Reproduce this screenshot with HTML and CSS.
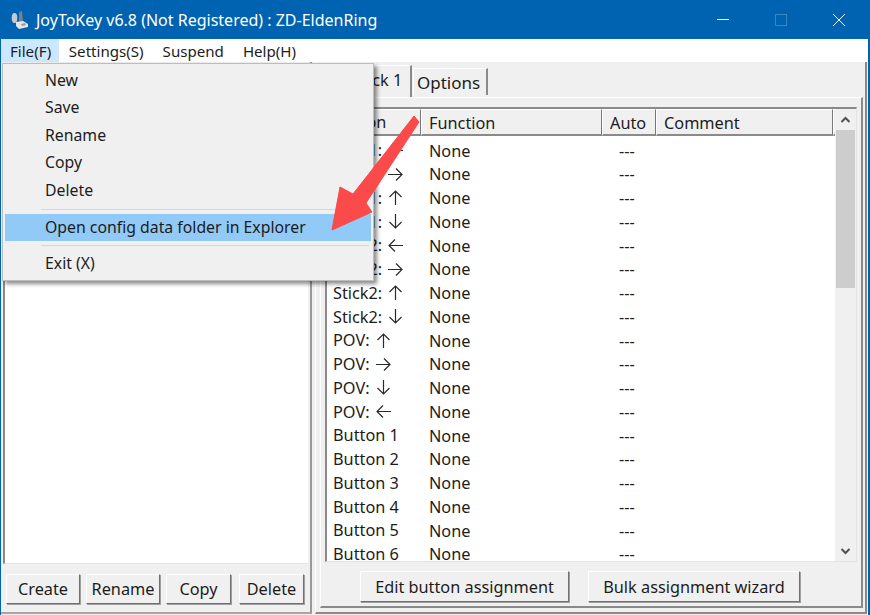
FILE: index.html
```html
<!DOCTYPE html>
<html lang="en">
<head>
    <meta charset="UTF-8">
    <title>JoyToKey</title>
    <link rel="stylesheet" href="styles.css">
</head>
<body>
    <div class="window">
        <div class="titlebar">
            <svg class="app-icon" width="18" height="18" viewBox="0 0 18 18">
                <ellipse cx="3.5" cy="7" rx="2.8" ry="5" fill="#c4cad0"/>
                <path d="M8 1 L11 0 L12 11 L8 12 Z" fill="#76818d"/>
                <path d="M5 11 L12 10 L17 13 L17 16 L8 18 L5 15 Z" fill="#e4e7ea"/>
                <path d="M10 13 L14 12 L15 14 L11 15 Z" fill="#b98c92"/>
            </svg>
            <span class="title-text">JoyToKey v6.8 (Not Registered) : ZD-EldenRing</span>
            <div class="win-controls">
                <svg width="12" height="12" viewBox="0 0 12 12"><path d="M0 5.5 H12" stroke="#fff" fill="none"/></svg>
                <svg width="12" height="12" viewBox="0 0 12 12"><rect x="0.5" y="0.5" width="11" height="11" stroke="#3a86c4" fill="none"/></svg>
                <svg width="12" height="12" viewBox="0 0 12 12"><path d="M0 0 L12 12 M12 0 L0 12" stroke="#fff" fill="none"/></svg>
            </div>
        </div>
        <div class="menubar">
            <span class="menu-item active">File(F)</span>
            <span class="menu-item">Settings(S)</span>
            <span class="menu-item">Suspend</span>
            <span class="menu-item">Help(H)</span>
        </div>
        <div class="content">
            <div class="left-pane">
                <div class="config-list"></div>
                <div class="left-buttons">
                    <button class="btn btn-create">Create</button>
                    <button class="btn btn-rename">Rename</button>
                    <button class="btn btn-copy">Copy</button>
                    <button class="btn btn-delete">Delete</button>
                </div>
            </div>
            <div class="right-pane">
                <div class="tabs">
                    <div class="tab tab-stick">Joystick 1</div>
                    <div class="tab tab-options">Options</div>
                </div>
                <div class="page">
                    <div class="grid">
                        <div class="grid-main">
                            <div class="grid-head">
                                <div class="col-button head-cell">Button</div>
                                <div class="col-function head-cell">Function</div>
                                <div class="col-auto head-cell">Auto</div>
                                <div class="col-comment head-cell">Comment</div>
                                <div class="head-cell head-rest"></div>
                            </div>
                            <div class="rows" id="rows"></div>
                        </div>
                        <div class="scrollbar">
                            <svg class="scroll-arrow" width="21" height="21" viewBox="0 0 21 21"><path d="M6.5 13 L10.5 9 L14.5 13" stroke="#505050" stroke-width="2" fill="none"/></svg>
                            <div class="scroll-thumb"></div>
                            <div class="scroll-track"></div>
                            <svg class="scroll-arrow" width="21" height="21" viewBox="0 0 21 21"><path d="M6.5 9 L10.5 13 L14.5 9" stroke="#505050" stroke-width="2" fill="none"/></svg>
                        </div>
                    </div>
                    <div class="page-buttons">
                        <button class="btn btn-edit">Edit button assignment</button>
                        <button class="btn btn-bulk">Bulk assignment wizard</button>
                    </div>
                </div>
            </div>
        </div>

        <div class="dropdown">
            <div class="drop-item">New</div>
            <div class="drop-item">Save</div>
            <div class="drop-item">Rename</div>
            <div class="drop-item">Copy</div>
            <div class="drop-item">Delete</div>
            <div class="drop-sep"></div>
            <div class="drop-item selected">Open config data folder in Explorer</div>
            <div class="drop-sep"></div>
            <div class="drop-item">Exit (X)</div>
        </div>

        <svg class="red-arrow" width="100" height="125" viewBox="0 0 100 125">
            <path d="M83 2 L88 8 L35 89 L41 98 L1 116 L9 73 L22 80 Z" fill="#fa4a4a" stroke="#fa4a4a" stroke-linejoin="round"/>
        </svg>
    </div>

    <script>
        const arrowPaths = {
            up: 'M7.5 15 V1 M1.5 7 L7.5 1 L13.5 7',
            down: 'M7.5 0 V14 M1.5 8 L7.5 14 L13.5 8',
            left: 'M15 7.5 H1 M7 1.5 L1 7.5 L7 13.5',
            right: 'M0 7.5 H14 M8 1.5 L14 7.5 L8 13.5'
        };
        const rowNames = [
            ['Stick1:', 'left'], ['Stick1:', 'right'], ['Stick1:', 'up'], ['Stick1:', 'down'],
            ['Stick2:', 'left'], ['Stick2:', 'right'], ['Stick2:', 'up'], ['Stick2:', 'down'],
            ['POV:', 'up'], ['POV:', 'right'], ['POV:', 'down'], ['POV:', 'left'],
            ['Button 1'], ['Button 2'], ['Button 3'], ['Button 4'], ['Button 5'], ['Button 6']
        ];
        let html = '';
        rowNames.forEach(([name, dir]) => {
            const arrow = dir
                ? `<svg class="dir-arrow" width="15" height="15" viewBox="0 0 15 15"><path d="${arrowPaths[dir]}" stroke="#2a2a2a" stroke-width="1.2" fill="none"/></svg>`
                : '';
            html += `<div class="row">
                <div class="col-button">${name}${arrow}</div>
                <div class="col-function">None</div>
                <div class="col-auto">---</div>
                <div class="col-comment"></div>
            </div>`;
        });
        document.getElementById('rows').innerHTML = html;
    </script>
</body>
</html>
```

FILE: styles.css
```css
* {
    box-sizing: border-box;
}
html, body {
    margin: 0;
    padding: 0;
}
body {
    width: 870px;
    height: 615px;
    overflow: hidden;
    font-family: "Noto Sans", "Noto Sans CJK SC", sans-serif;
    font-size: 16.3px;
    color: #1c1c1c;
}
.window {
    position: relative;
    width: 870px;
    height: 615px;
    display: flex;
    flex-direction: column;
    background-color: #f0f0f0;
    border-left: 1px solid #0063b1;
    border-right: 2px solid #0063b1;
    overflow: hidden;
}

/* title bar */
.titlebar {
    height: 39px;
    flex: none;
    display: flex;
    align-items: center;
    padding-left: 10px;
    background-color: #0063b1;
    color: #fff;
}
.app-icon {
    margin-right: 7px;
}
.title-text {
    font-size: 16px;
}
.win-controls {
    margin-left: auto;
    margin-right: 23px;
    display: flex;
    gap: 46px;
}

/* menu */
.menubar {
    height: 23px;
    flex: none;
    display: flex;
    background-color: #fff;
}
.menu-item {
    padding: 0 9.5px;
    line-height: 24px;
    font-size: 15.1px;
}
.menu-item.active {
    padding: 0 8px 0 9px;
    background-color: #cce8ff;
}
.dropdown {
    position: absolute;
    left: 1px;
    top: 63px;
    width: 372px;
    height: 218px;
    padding: 2.5px 2px;
    background-color: #f0f0f0;
    border: 1px solid #bdbdbd;
    box-shadow: 3px 3px 4px rgba(0,0,0,0.45);
}
.drop-item {
    height: 27.5px;
    line-height: 27px;
    padding-left: 40px;
    font-size: 15.8px;
}
.drop-item.selected {
    background-color: #91c9f7;
}
.drop-sep {
    height: 1px;
    margin: 4.5px 2px 4px 36px;
    background-color: #d7d7d7;
}
.drop-item.selected + .drop-sep {
    margin-top: 4px;
}

/* left side */
.content {
    flex: 1;
    display: flex;
    min-height: 0;
}
.left-pane {
    width: 311px;
    flex: none;
    display: flex;
    flex-direction: column;
    margin-bottom: 1px;
    padding: 2px 0 1px 2px;
    border-right: 2px solid #9a9a9a;
    border-bottom: 2px solid #a6a6a6;
}
.config-list {
    flex: 1;
    margin-right: 2px;
    background-color: #fff;
    border-left: 2px solid #8a8a8a;
    border-bottom: 1px solid #e3e3e3;
}
.left-buttons {
    height: 47px;
    flex: none;
    display: flex;
    padding: 10px 0 0 3px;
}
.left-buttons .btn {
    height: 30px;
}
.btn {
    height: 31px;
    padding: 0;
    font-family: inherit;
    font-size: 16.3px;
    color: #1c1c1c;
    background-color: #f0f0f0;
    border: 1px solid;
    border-color: #fff #6f6f6f #6f6f6f #fff;
    box-shadow: 1px 1px 0 #a0a0a0;
}
.btn-create { width: 74px; margin-right: 6px; }
.btn-rename { width: 74px; margin-right: 6px; }
.btn-copy { width: 65px; margin-right: 8px; }
.btn-delete { width: 65px; }

/* right side */
.right-pane {
    flex: 1;
    display: flex;
    flex-direction: column;
    min-width: 0;
    margin: 0 1px 1px 3px;
    padding: 0 2px 4px 4px;
    border-left: 1px solid #fff;
    border-right: 2px solid #8a8a8a;
    border-bottom: 2px solid #8a8a8a;
}
.tabs {
    height: 35px;
    flex: none;
    display: flex;
    align-items: flex-end;
    padding-left: 8px;
}
.tab {
    padding-left: 3px;
    border-top: 1px solid #fff;
    border-left: 1px solid #fff;
    border-right: 2px solid #8a8a8a;
    background-color: #f0f0f0;
}
.tab-stick {
    width: 84px;
    height: 32px;
    margin-right: 1px;
    padding-right: 9px;
    line-height: 29px;
    text-align: right;
    white-space: nowrap;
}
.tab-options {
    width: 75px;
    height: 27px;
    margin-bottom: 2px;
    line-height: 28px;
    font-size: 17px;
}
.page {
    flex: 1;
    display: flex;
    flex-direction: column;
    min-height: 0;
    padding: 9px 4px 0 4px;
    border-top: 1px solid #fff;
    border-left: 1px solid #fff;
    border-right: 2px solid #8a8a8a;
    border-bottom: 2px solid #8a8a8a;
}
.grid {
    height: 455px;
    flex: none;
    display: flex;
    background-color: #fff;
    border-top: 2px solid #8a8a8a;
    border-left: 2px solid #8a8a8a;
    border-right: 1px solid #e3e3e3;
    border-bottom: 1px solid #e3e3e3;
    overflow: hidden;
}
.grid-main {
    flex: 1;
    min-width: 0;
    display: flex;
    flex-direction: column;
}
.grid-head {
    height: 27px;
    flex: none;
    display: flex;
    background-color: #f0f0f0;
}
.head-cell {
    line-height: 26px;
    border-top: 1px solid #fff;
    border-left: 1px solid #fff;
    border-right: 1px solid #777;
    border-bottom: 2px solid #8a8a8a;
}
.head-rest {
    flex: 1;
    border-right: none;
}
.col-button {
    width: 94px;
    flex: none;
    display: flex;
    align-items: center;
    gap: 6px;
    padding-left: 6px;
    white-space: nowrap;
}
.col-function { width: 181px; flex: none; padding-left: 8px; }
.col-auto { width: 54px; flex: none; padding-left: 8px; }
.col-comment { width: 177px; flex: none; padding-left: 8px; }
.head-cell.col-function,
.head-cell.col-auto,
.head-cell.col-comment {
    padding-left: 7px;
}
.rows {
    flex: 1;
    overflow: hidden;
    padding-top: 2.5px;
}
.row {
    display: flex;
    height: 23.75px;
    line-height: 24px;
}
.row .col-auto {
    padding-left: 17px;
}
.dir-arrow {
    flex: none;
}
.scrollbar {
    width: 21px;
    flex: none;
    display: flex;
    flex-direction: column;
    background-color: #f0f0f0;
}
.scroll-arrow {
    flex: none;
}
.scroll-thumb {
    height: 158px;
    flex: none;
    margin: 0 1px;
    background-color: #cdcdcd;
}
.scroll-track {
    flex: 1;
}
.page-buttons {
    display: flex;
    padding: 9px 0 0 35px;
    gap: 19px;
}
.btn-edit { width: 209px; }
.btn-bulk { width: 212px; }

/* annotation drawn over the screenshot */
.red-arrow {
    position: absolute;
    left: 330px;
    top: 114px;
}
```
